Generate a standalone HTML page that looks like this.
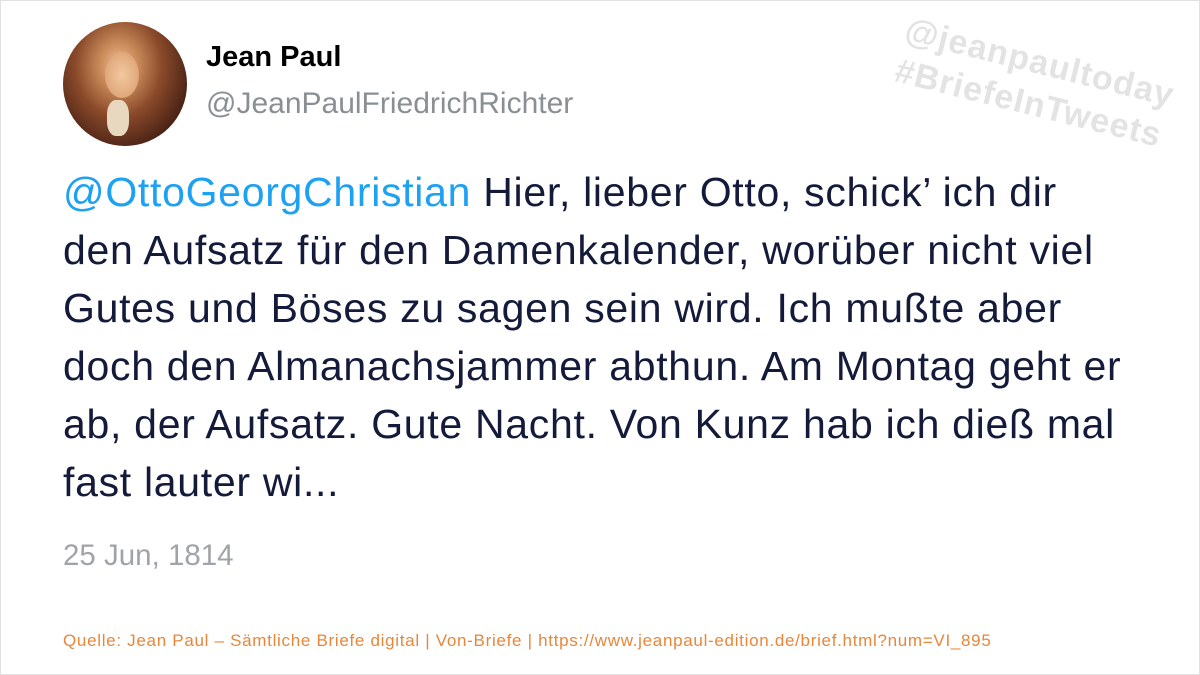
<!DOCTYPE html>
<html><head><meta charset="utf-8"><style>
html,body{margin:0;padding:0;background:#fff;}
.wrap{position:relative;width:1198px;height:673px;border:1px solid #e1e1e1;overflow:hidden;font-family:"Liberation Sans",sans-serif;}
.av{position:absolute;left:62px;top:21px;width:124px;height:124px;border-radius:50%;background:radial-gradient(ellipse at 45% 35%,#f0c090 0%,#c98a5a 20%,#8a4a2a 45%,#4a2216 75%,#3a1a12 100%);}
.av .face{position:absolute;left:42px;top:30px;width:34px;height:46px;border-radius:50%;background:radial-gradient(#f2c8a0,#d89a6a);}
.av .coll{position:absolute;left:44px;top:78px;width:22px;height:36px;background:#e8d8c0;border-radius:40%;}
.name{position:absolute;left:205px;top:40px;font-weight:bold;font-size:29px;color:#000;}
.handle{position:absolute;left:205px;top:86px;font-size:30px;color:#8a8f94;}
.txt{position:absolute;left:62px;top:162px;font-size:41px;letter-spacing:0.7px;line-height:58px;color:#141a3a;white-space:nowrap;}
.txt .m{color:#1da1f2;}
.date{position:absolute;left:62px;top:538px;font-size:29.5px;color:#a0a4a8;}
.src{position:absolute;left:62px;top:630px;font-size:17px;letter-spacing:0.7px;color:#e8863a;}
.wm{position:absolute;left:910px;top:8px;transform:rotate(14deg);transform-origin:left top;font-weight:bold;font-size:34px;letter-spacing:1px;line-height:42px;color:#e3e3e3;}
</style></head><body><div class="wrap">
<div class="av"><div class="face"></div><div class="coll"></div></div>
<div class="name">Jean Paul</div>
<div class="handle">@JeanPaulFriedrichRichter</div>
<div class="wm">@jeanpaultoday<br>#BriefeInTweets</div>
<div class="txt"><span class="m">@OttoGeorgChristian</span> Hier, lieber Otto, schick’ ich dir<br>den Aufsatz für den Damenkalender, worüber nicht viel<br>Gutes und Böses zu sagen sein wird. Ich mußte aber<br>doch den Almanachsjammer abthun. Am Montag geht er<br>ab, der Aufsatz. Gute Nacht. Von Kunz hab ich dieß mal<br>fast lauter wi...</div>
<div class="date">25 Jun, 1814</div>
<div class="src">Quelle: Jean Paul – Sämtliche Briefe digital | Von-Briefe | https://www.jeanpaul-edition.de/brief.html?num=VI_895</div>
</div></body></html>
